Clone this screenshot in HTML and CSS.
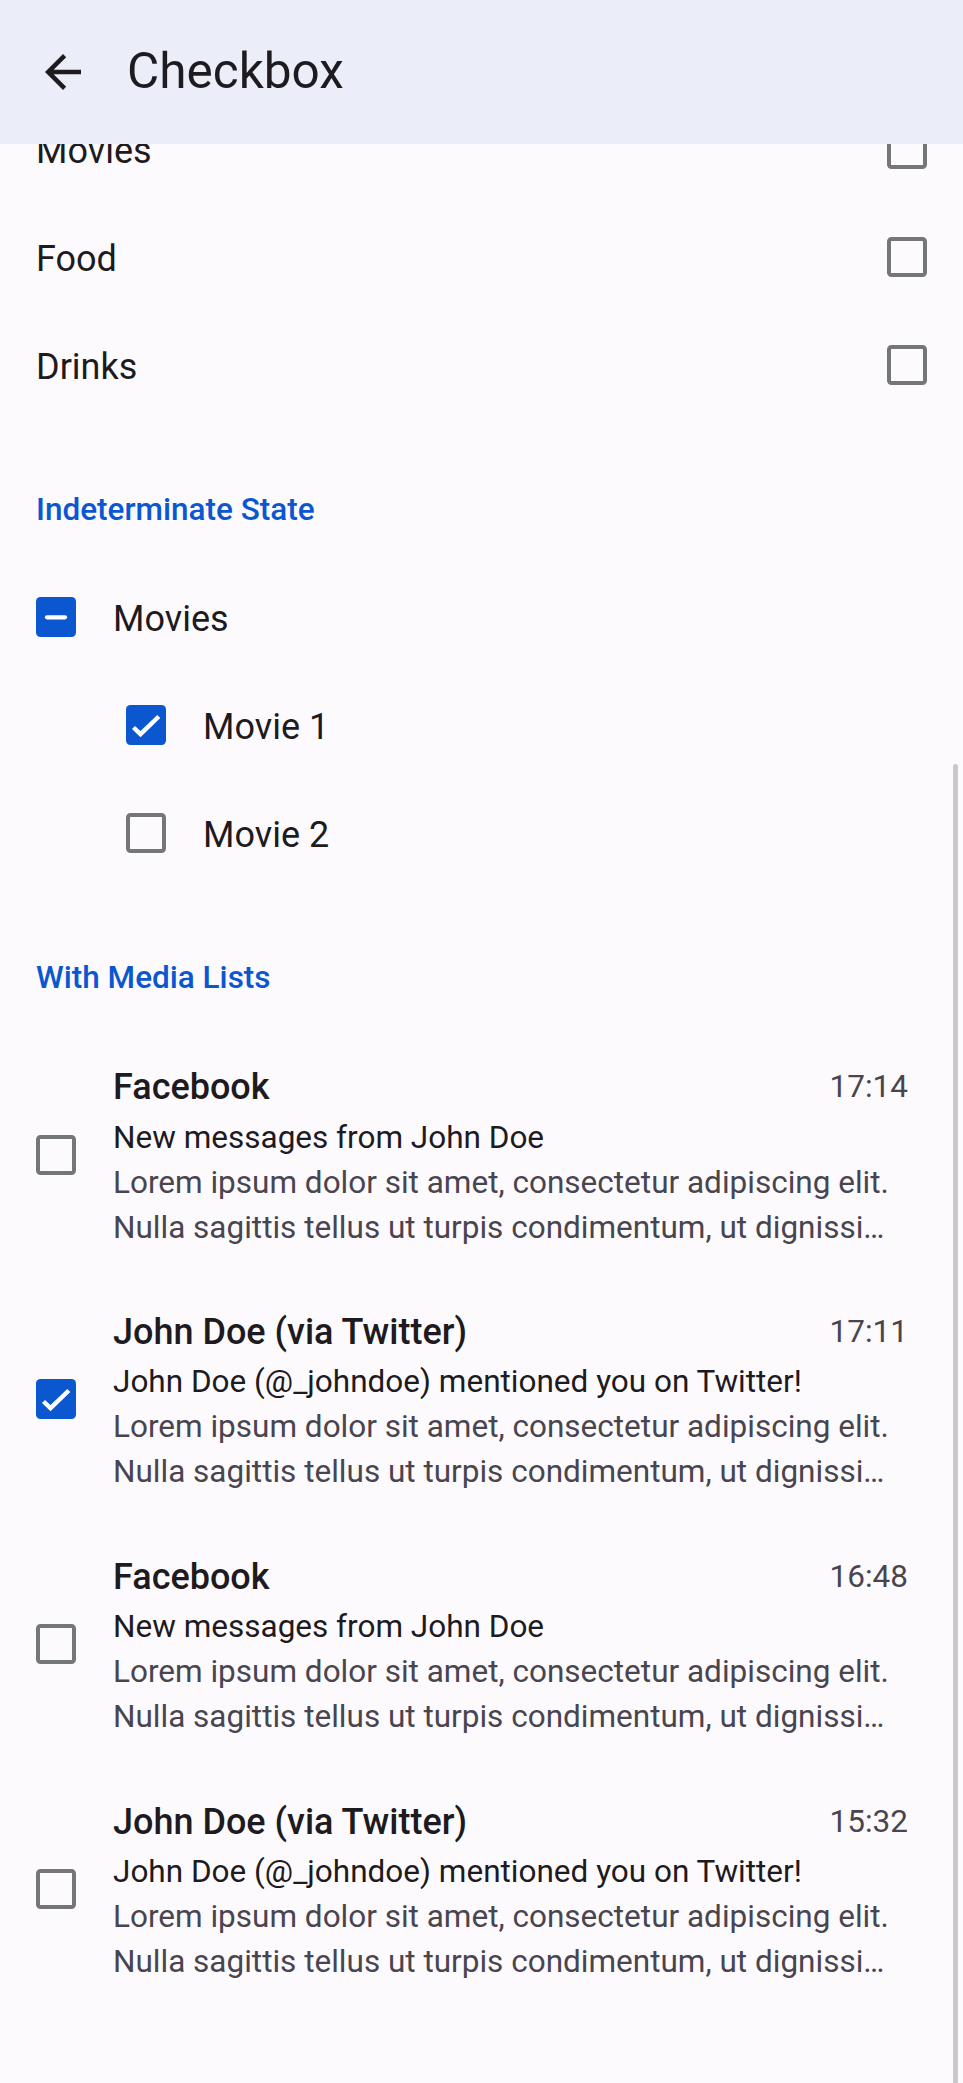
FILE: index.html
```html
<!DOCTYPE html>
<html lang="en">
<head>
<meta charset="utf-8">
<title>Checkbox</title>
<link rel="stylesheet" href="styles.css">
</head>
<body>
<div class="screen">
  <header class="appbar">
    <button class="back" aria-label="Back">
      <svg width="54" height="54" viewBox="0 0 24 24"><path d="M20 11H7.83l5.59-5.59L12 4l-8 8 8 8 1.41-1.41L7.83 13H20v-2z" fill="#1D1B20"/></svg>
    </button>
    <h1 class="title">Checkbox</h1>
  </header>

  <main class="content">
    <div class="scrolled">
      <ul class="list simple">
        <li class="row"><span class="label">Movies</span><span class="cb"></span></li>
        <li class="row"><span class="label">Food</span><span class="cb"></span></li>
        <li class="row"><span class="label">Drinks</span><span class="cb"></span></li>
      </ul>

      <h2 class="subheader">Indeterminate State</h2>
      <ul class="list tree">
        <li class="row lead">
          <span class="cb on"><svg width="40" height="40" viewBox="0 0 40 40"><path d="M11 20.3H29" stroke="#fff" stroke-width="4.2" stroke-linecap="round"/></svg></span>
          <span class="label">Movies</span>
        </li>
        <li class="row lead child">
          <span class="cb on"><svg width="40" height="40" viewBox="0 0 40 40"><path d="M7.5 22.5L14.5 29.2L32.8 11.5" fill="none" stroke="#fff" stroke-width="4.4"/></svg></span>
          <span class="label">Movie 1</span>
        </li>
        <li class="row lead child">
          <span class="cb"></span>
          <span class="label">Movie 2</span>
        </li>
      </ul>

      <h2 class="subheader">With Media Lists</h2>
      <ul class="list media">
        <li class="item">
          <span class="cb"></span>
          <div class="text">
            <div class="head"><span class="name">Facebook</span><span class="time">17:14</span></div>
            <div class="sub">New messages from John Doe</div>
            <p class="body">Lorem ipsum dolor sit amet, consectetur adipiscing elit. Nulla sagittis tellus ut turpis condimentum, ut dignissim lacus tincidunt. Cras dapibus felis sed mauris fermentum.</p>
          </div>
        </li>
        <li class="item">
          <span class="cb on"><svg width="40" height="40" viewBox="0 0 40 40"><path d="M7.5 22.5L14.5 29.2L32.8 11.5" fill="none" stroke="#fff" stroke-width="4.4"/></svg></span>
          <div class="text">
            <div class="head"><span class="name">John Doe (via Twitter)</span><span class="time">17:11</span></div>
            <div class="sub">John Doe (@_johndoe) mentioned you on Twitter!</div>
            <p class="body">Lorem ipsum dolor sit amet, consectetur adipiscing elit. Nulla sagittis tellus ut turpis condimentum, ut dignissim lacus tincidunt. Cras dapibus felis sed mauris fermentum.</p>
          </div>
        </li>
        <li class="item">
          <span class="cb"></span>
          <div class="text">
            <div class="head"><span class="name">Facebook</span><span class="time">16:48</span></div>
            <div class="sub">New messages from John Doe</div>
            <p class="body">Lorem ipsum dolor sit amet, consectetur adipiscing elit. Nulla sagittis tellus ut turpis condimentum, ut dignissim lacus tincidunt. Cras dapibus felis sed mauris fermentum.</p>
          </div>
        </li>
        <li class="item">
          <span class="cb"></span>
          <div class="text">
            <div class="head"><span class="name">John Doe (via Twitter)</span><span class="time">15:32</span></div>
            <div class="sub">John Doe (@_johndoe) mentioned you on Twitter!</div>
            <p class="body">Lorem ipsum dolor sit amet, consectetur adipiscing elit. Nulla sagittis tellus ut turpis condimentum, ut dignissim lacus tincidunt. Cras dapibus felis sed mauris fermentum.</p>
          </div>
        </li>
      </ul>
    </div>
  </main>
  <div class="scrollbar"></div>
</div>
</body>
</html>
```

FILE: styles.css
```css
html, body {
  margin: 0;
  padding: 0;
}

body {
  background: #FDFAFE;
  font-family: Roboto, "Liberation Sans", sans-serif;
  color: #1D1B20;
}

.screen {
  position: relative;
  width: 963px;
  height: 2083px;
  overflow: hidden;
  display: flex;
  flex-direction: column;
}

.appbar {
  flex: 0 0 144px;
  height: 144px;
  background: #EBEEF9;
  display: flex;
  align-items: center;
  padding-left: 36px;
  box-sizing: border-box;
  position: relative;
  z-index: 1;
}

.back {
  width: 54px;
  height: 54px;
  padding: 0;
  border: 0;
  background: none;
  display: flex;
}

.title {
  margin: 0 0 0 37px;
  font-size: 49.5px;
  font-weight: 400;
  line-height: 1.17;
  color: #1D1B20;
}

.content {
  flex: 1;
  overflow: hidden;
}

.scrolled {
  margin-top: -49px;
}

.list {
  list-style: none;
  margin: 0;
  padding: 0;
}

.row {
  height: 108px;
  display: flex;
  align-items: center;
  box-sizing: border-box;
}

.simple .row {
  justify-content: space-between;
  padding: 0 36px;
}

.label {
  font-size: 36px;
  padding-top: 3px;
  color: #1D1B20;
}

.cb {
  flex: 0 0 40px;
  width: 40px;
  height: 40px;
  box-sizing: border-box;
  border: 4.5px solid #747775;
  border-radius: 4.5px;
  display: flex;
  align-items: center;
  justify-content: center;
  overflow: hidden;
}

.cb.on {
  background: #0B57D0;
  border: 0;
}

.subheader {
  margin: 36px 0 0;
  height: 108px;
  display: flex;
  align-items: center;
  padding-left: 36px;
  font-size: 31.5px;
  font-weight: 500;
  color: #0B57D0;
}

.tree .row {
  padding-left: 36px;
  gap: 37px;
}

.tree .row.child {
  padding-left: 126px;
}

.media .item {
  display: flex;
  align-items: center;
  gap: 37px;
  padding: 28.5px 55px 26.4px 36px;
}

.text {
  flex: 1;
  min-width: 0;
}

.head {
  display: flex;
  justify-content: space-between;
  align-items: center;
  height: 55px;
}

.name {
  font-size: 36px;
  font-weight: 500;
  line-height: 54px;
  color: #1D1B20;
}

.time {
  font-size: 31.5px;
  line-height: 54px;
  color: #49454F;
}

.sub {
  font-size: 31.5px;
  line-height: 45px;
  color: #1D1B20;
}

.body {
  margin: 0;
  font-size: 31.5px;
  line-height: 45px;
  color: #49454F;
  display: -webkit-box;
  -webkit-box-orient: vertical;
  -webkit-line-clamp: 2;
  overflow: hidden;
}

.scrollbar {
  position: absolute;
  right: 5px;
  top: 764px;
  bottom: 0;
  width: 5px;
  border-radius: 3px 3px 0 0;
  background: #C9C8CC;
}
```
